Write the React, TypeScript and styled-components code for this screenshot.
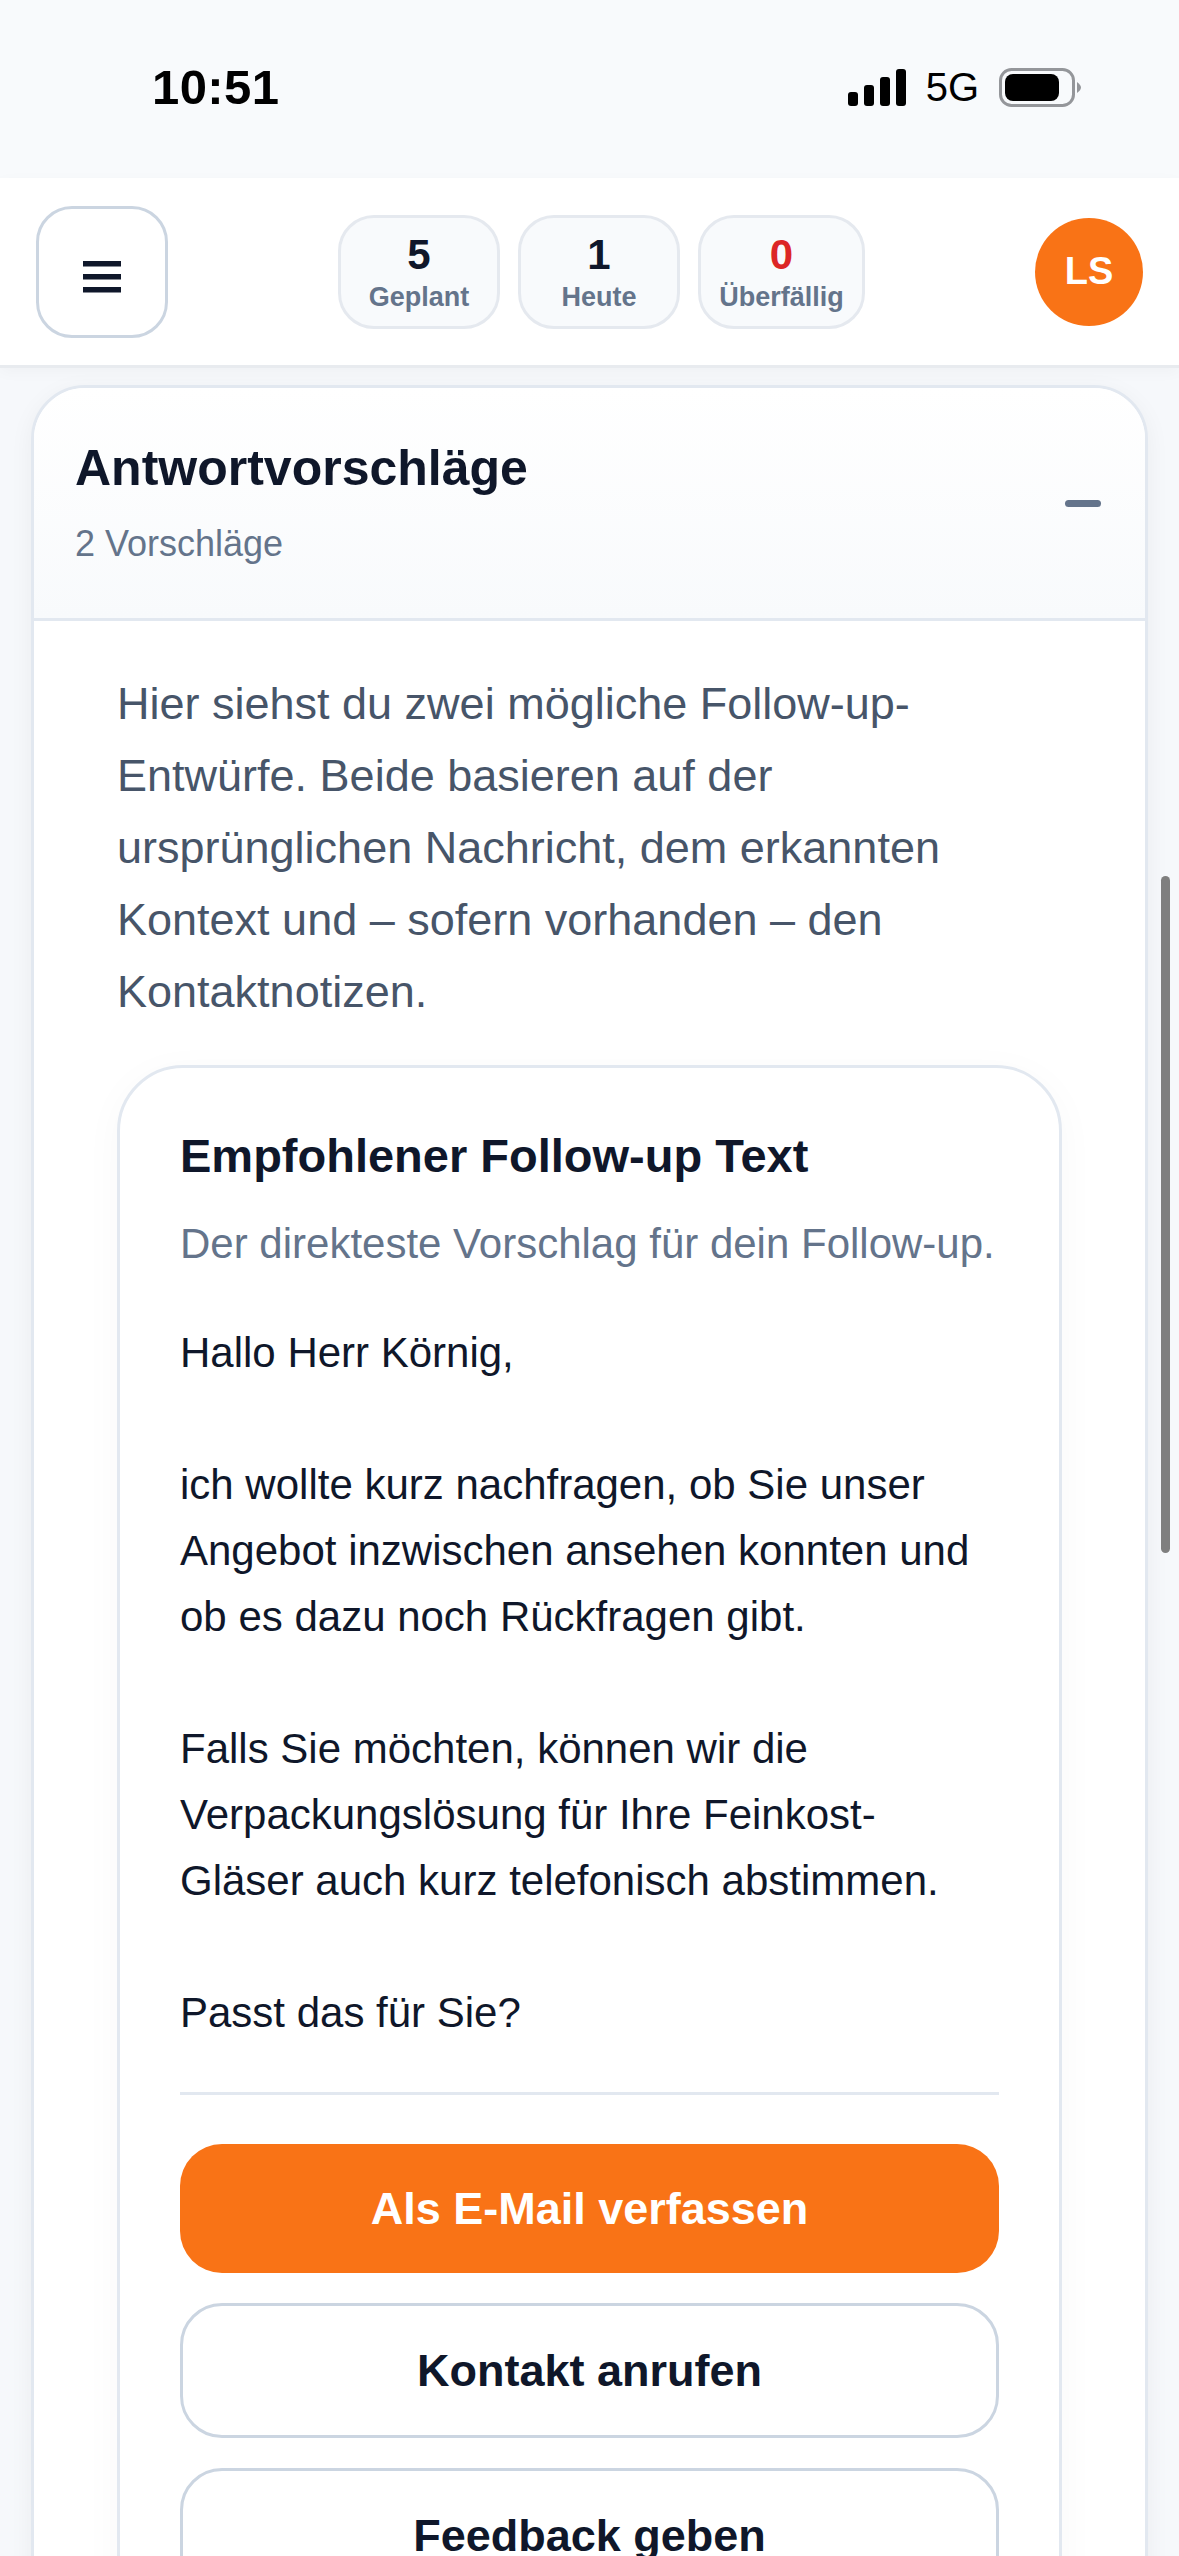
import styled, { createGlobalStyle } from "styled-components";

const GlobalStyle = createGlobalStyle`
    html, body {
        margin: 0;
        padding: 0;
        background: #f6f8fb;
        font-family: "Liberation Sans", Arial, sans-serif;
    }
    * { box-sizing: border-box; }
`;

const Page = styled.div`
    position: relative;
    width: 1179px;
    height: 2556px;
    overflow: hidden;
    background: #f6f8fb;
`;

const StatusBar = styled.div`
    height: 178px;
    background: #f8fafc;
    display: flex;
    align-items: center;
    justify-content: space-between;
    padding: 0 98px 4px 152px;
`;

const Time = styled.span`
    font-size: 49px;
    font-weight: 700;
    color: #000;
    letter-spacing: 0.4px;
`;

const StatusIcons = styled.div`
    display: flex;
    align-items: center;
    gap: 20px;
`;

const NetworkLabel = styled.span`
    font-size: 40px;
    color: #000;
`;

const Header = styled.header`
    position: relative;
    height: 190px;
    background: #fff;
    border-bottom: 3px solid #e8ebef;
    box-shadow: 0 4px 14px rgba(15, 23, 42, 0.03);
    display: flex;
    align-items: center;
    justify-content: space-between;
    padding: 0 36px;
`;

const MenuButton = styled.button`
    width: 132px;
    height: 132px;
    border: 3px solid #cbd5e1;
    border-radius: 36px;
    background: #fff;
    display: flex;
    align-items: center;
    justify-content: center;
    padding: 10px 0 0;
`;

const Stats = styled.div`
    display: flex;
    gap: 18px;
`;

const StatPill = styled.div<{ $w: number }>`
    width: ${(p) => p.$w}px;
    height: 114px;
    border: 3px solid #e5e9ef;
    border-radius: 36px;
    background: #f8fafc;
    display: flex;
    flex-direction: column;
    align-items: center;
    justify-content: center;
`;

const StatValue = styled.span<{ $alert?: boolean }>`
    font-size: 42px;
    line-height: 50px;
    font-weight: 700;
    color: ${(p) => (p.$alert ? "#dc2626" : "#0f172a")};
`;

const StatLabel = styled.span`
    font-size: 27px;
    line-height: 34px;
    font-weight: 700;
    color: #64748b;
`;

const Avatar = styled.div`
    width: 108px;
    height: 108px;
    border-radius: 50%;
    background: #f97316;
    color: #fff;
    font-size: 38px;
    font-weight: 700;
    display: flex;
    align-items: center;
    justify-content: center;
`;

const Main = styled.main`
    padding: 17px 31px 0;
`;

const Card = styled.section`
    background: #fff;
    border: 3px solid #e2e8f0;
    border-radius: 54px;
    overflow: hidden;
    box-shadow: 0 6px 24px rgba(15, 23, 42, 0.05);
`;

const CardHeader = styled.div`
    height: 233px;
    padding: 0 44px 0 41px;
    display: flex;
    align-items: center;
    justify-content: space-between;
    background: linear-gradient(180deg, #ffffff, #f8fafc);
    border-bottom: 3px solid #e2e8f0;
`;

const CardHeading = styled.div`
    align-self: flex-start;
    padding-top: 50px;
`;

const CardTitle = styled.h2`
    margin: 0;
    font-size: 50px;
    line-height: 60px;
    font-weight: 700;
    color: #0f172a;
`;

const CardCount = styled.p`
    margin: 24px 0 0;
    font-size: 36px;
    line-height: 44px;
    color: #64748b;
`;

const Collapse = styled.span`
    width: 36px;
    height: 7px;
    border-radius: 4px;
    background: #64748b;
`;

const CardBody = styled.div`
    padding: 47px 83px 0;
`;

const Intro = styled.p`
    margin: 0 0 37px;
    font-size: 45px;
    line-height: 72px;
    color: #475569;
`;

const Suggestion = styled.article`
    border: 3px solid #e2e8f0;
    border-radius: 66px;
    padding: 60px 60px 60px;
    background: #fff;
    box-shadow: 0 8px 40px rgba(15, 23, 42, 0.03);
`;

const SuggestionTitle = styled.h3`
    margin: 0;
    font-size: 47px;
    line-height: 56px;
    font-weight: 700;
    color: #0f172a;
`;

const SuggestionHint = styled.p`
    margin: 32px 0 0;
    font-size: 42px;
    line-height: 56px;
    color: #64748b;
`;

const Draft = styled.p`
    margin: 48px 0 0;
    font-size: 42px;
    line-height: 66px;
    color: #0f172a;
    white-space: pre-wrap;
`;

const Divider = styled.hr`
    margin: 46px 0 49px;
    border: 0;
    height: 3px;
    background: #e2e8f0;
`;

const Actions = styled.div`
    display: flex;
    flex-direction: column;
    gap: 30px;
`;

const ActionButton = styled.button<{ $primary?: boolean }>`
    height: ${(p) => (p.$primary ? 129 : 135)}px;
    border-radius: 42px;
    border: ${(p) => (p.$primary ? "0" : "3px solid #cbd5e1")};
    background: ${(p) => (p.$primary ? "#f97316" : "#fff")};
    color: ${(p) => (p.$primary ? "#fff" : "#0f172a")};
    font-family: inherit;
    font-size: 45px;
    font-weight: 700;
    flex-shrink: 0;
`;

const Scrollbar = styled.div`
    position: absolute;
    right: 9px;
    top: 876px;
    width: 9px;
    height: 677px;
    border-radius: 5px;
    background: #7f7f7f;
`;

const SignalIcon = () => (
    <svg width="58" height="37" viewBox="0 0 58 37">
        <rect x="0" y="23" width="10" height="14" rx="3" fill="#000" />
        <rect x="16" y="16" width="10" height="21" rx="3" fill="#000" />
        <rect x="32" y="8" width="10" height="29" rx="3" fill="#000" />
        <rect x="48" y="0" width="10" height="37" rx="3" fill="#000" />
    </svg>
);

const BatteryIcon = () => (
    <svg width="82" height="39" viewBox="0 0 82 39">
        <rect x="1.5" y="1.5" width="73" height="36" rx="11" fill="none" stroke="#94969a" strokeWidth="3" />
        <rect x="6" y="6" width="54" height="27" rx="8" fill="#000" />
        <path d="M78 14 Q82 17 82 19.5 Q82 22 78 25 Z" fill="#94969a" />
    </svg>
);

const MenuIcon = () => (
    <svg width="38" height="32" viewBox="0 0 38 32">
        <rect x="0" y="0" width="38" height="5.5" fill="#0f172a" />
        <rect x="0" y="13" width="38" height="5.5" fill="#0f172a" />
        <rect x="0" y="26" width="38" height="5.5" fill="#0f172a" />
    </svg>
);

const draft = `Hallo Herr Körnig,

ich wollte kurz nachfragen, ob Sie unser Angebot inzwischen ansehen konnten und ob es dazu noch Rückfragen gibt.

Falls Sie möchten, können wir die Verpackungslösung für Ihre Feinkost-Gläser auch kurz telefonisch abstimmen.

Passt das für Sie?`;

export default function App() {
    return (
        <Page>
            <GlobalStyle />
            <StatusBar>
                <Time>10:51</Time>
                <StatusIcons>
                    <SignalIcon />
                    <NetworkLabel>5G</NetworkLabel>
                    <BatteryIcon />
                </StatusIcons>
            </StatusBar>
            <Header>
                <MenuButton aria-label="Menü">
                    <MenuIcon />
                </MenuButton>
                <Stats>
                    <StatPill $w={162}>
                        <StatValue>5</StatValue>
                        <StatLabel>Geplant</StatLabel>
                    </StatPill>
                    <StatPill $w={162}>
                        <StatValue>1</StatValue>
                        <StatLabel>Heute</StatLabel>
                    </StatPill>
                    <StatPill $w={167}>
                        <StatValue $alert>0</StatValue>
                        <StatLabel>Überfällig</StatLabel>
                    </StatPill>
                </Stats>
                <Avatar>LS</Avatar>
            </Header>
            <Main>
                <Card>
                    <CardHeader>
                        <CardHeading>
                            <CardTitle>Antwortvorschläge</CardTitle>
                            <CardCount>2 Vorschläge</CardCount>
                        </CardHeading>
                        <Collapse />
                    </CardHeader>
                    <CardBody>
                        <Intro>
                            Hier siehst du zwei mögliche Follow-up-Entwürfe. Beide basieren auf der ursprünglichen Nachricht, dem erkannten Kontext und – sofern vorhanden – den Kontaktnotizen.
                        </Intro>
                        <Suggestion>
                            <SuggestionTitle>Empfohlener Follow-up Text</SuggestionTitle>
                            <SuggestionHint>Der direkteste Vorschlag für dein Follow-up.</SuggestionHint>
                            <Draft>{draft}</Draft>
                            <Divider />
                            <Actions>
                                <ActionButton $primary>Als E-Mail verfassen</ActionButton>
                                <ActionButton>Kontakt anrufen</ActionButton>
                                <ActionButton>Feedback geben</ActionButton>
                            </Actions>
                        </Suggestion>
                    </CardBody>
                </Card>
            </Main>
            <Scrollbar />
        </Page>
    );
}
